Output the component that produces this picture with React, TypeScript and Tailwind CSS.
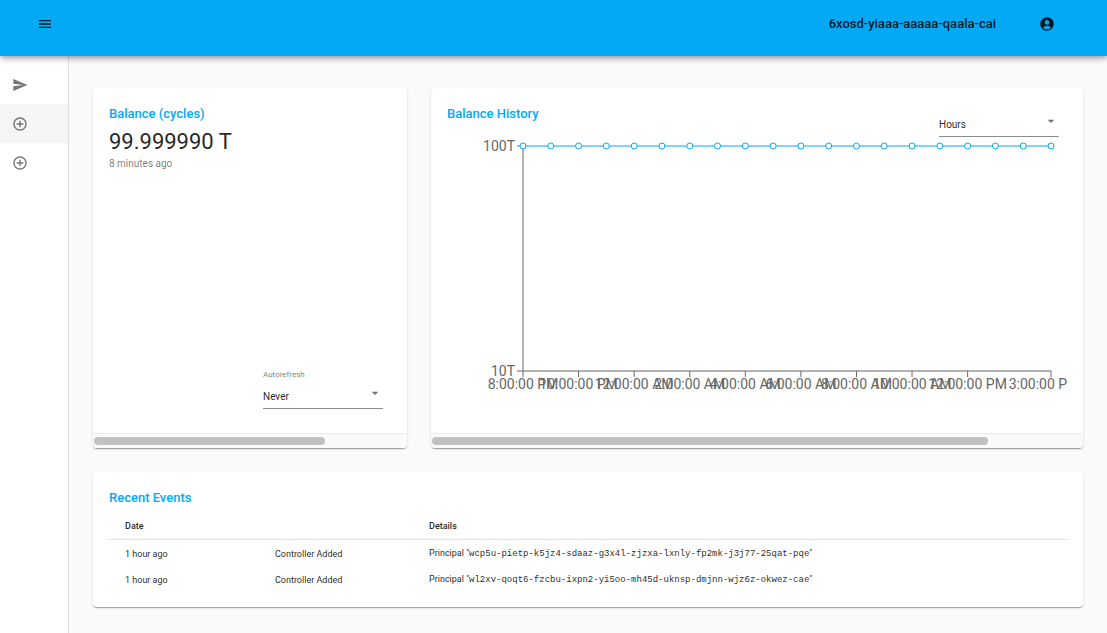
import type { ReactNode } from 'react';
import { MdAccountCircle, MdAddCircleOutline, MdArrowDropDown, MdMenu, MdSend } from 'react-icons/md';

const CARD_SHADOW =
  'shadow-[0_2px_1px_-1px_rgba(0,0,0,0.2),0_1px_1px_0_rgba(0,0,0,0.14),0_1px_3px_0_rgba(0,0,0,0.12)]';

function Card({ className = '', children }: { className?: string; children: ReactNode }) {
  return (
    <section className={`flex min-w-0 flex-col overflow-hidden rounded bg-white ${CARD_SHADOW} ${className}`}>
      {children}
    </section>
  );
}

function Title({ children }: { children: ReactNode }) {
  return <h2 className="text-[13px] leading-5 font-medium text-[#03a9f4]">{children}</h2>;
}

function Picker({ id, label, hideLabel, options }: { id: string; label: string; hideLabel?: boolean; options: string[] }) {
  return (
    <div className="flex w-[120px] flex-col">
      <label htmlFor={id} className={hideLabel ? 'sr-only' : 'text-[8px] leading-3 text-black/54'}>
        {label}
      </label>
      <div className={`relative ${hideLabel ? '' : 'mt-1'}`}>
        <select
          id={id}
          className="block h-6 w-full appearance-none rounded-none border-b border-[#8c8c8c] bg-transparent text-[10px] leading-4 text-black/87 outline-none"
        >
          {options.map((option) => (
            <option key={option}>{option}</option>
          ))}
        </select>
        <MdArrowDropDown className="pointer-events-none absolute top-0 right-0 size-4 text-black/54" />
      </div>
    </div>
  );
}

function ScrollTrack({ thumb }: { thumb: string }) {
  return (
    <div aria-hidden="true" className="h-[15px] border-t border-[#e8e8e8] bg-[#fafafa] px-px pt-[3px]">
      <div className={`h-2 rounded-full bg-[#c1c1c1] ${thumb}`} />
    </div>
  );
}

const LEFT = 76;
const RIGHT = 604;
const TOP = 9;
const BOTTOM = 234;
const POINTS = Array.from({ length: 20 }, (_, i) => LEFT + (i * (RIGHT - LEFT)) / 19);
const TICKS = [
  { index: 0, label: '8:00:00 PM' },
  { index: 2, label: '10:00:00 PM' },
  { index: 4, label: '12:00:00 AM' },
  { index: 6, label: '2:00:00 AM' },
  { index: 8, label: '4:00:00 AM' },
  { index: 10, label: '6:00:00 AM' },
  { index: 12, label: '8:00:00 AM' },
  { index: 14, label: '10:00:00 AM' },
  { index: 16, label: '12:00:00 PM' },
  { index: 19, label: '3:00:00 PM', x: 597 },
];

function HistoryChart() {
  return (
    <svg viewBox="0 0 620 264" className="block w-full overflow-hidden" role="img" aria-label="Balance history by hour">
      <g stroke="#666" fill="none">
        <path d={`M${LEFT} ${TOP}V${BOTTOM}M${LEFT - 6} ${TOP}H${LEFT}M${LEFT - 6} ${BOTTOM}H${RIGHT}`} />
        {TICKS.map(({ index }) => (
          <path key={index} d={`M${POINTS[index]} ${BOTTOM}v6`} />
        ))}
      </g>
      <g fill="#666" fontSize="14" textAnchor="end">
        <text x={LEFT - 8} y={TOP + 5}>100T</text>
        <text x={LEFT - 8} y={BOTTOM + 5}>10T</text>
      </g>
      <g fill="#666" fontSize="14" textAnchor="middle">
        {TICKS.map(({ index, label, x }) => (
          <text key={index} x={x ?? POINTS[index]} y={BOTTOM + 18}>{label}</text>
        ))}
      </g>
      <path d={`M${LEFT} ${TOP}H${RIGHT}`} stroke="#03a9f4" />
      <g fill="#fff" stroke="#03a9f4">
        {POINTS.map((x) => (
          <circle key={x} cx={x} cy={TOP} r="3" />
        ))}
      </g>
    </svg>
  );
}

const EVENTS = [
  { date: '1 hour ago', event: 'Controller Added', principal: 'wcp5u-pietp-k5jz4-sdaaz-g3x4l-zjzxa-lxnly-fp2mk-j3j77-25qat-pqe' },
  { date: '1 hour ago', event: 'Controller Added', principal: 'wl2xv-qoqt6-fzcbu-ixpn2-yi5oo-mh45d-uknsp-dmjnn-wjz6z-okwez-cae' },
];

const NAV = [
  { label: 'Send cycles', Icon: MdSend, active: false },
  { label: 'Create canister', Icon: MdAddCircleOutline, active: true },
  { label: 'Create wallet', Icon: MdAddCircleOutline, active: false },
];

export default function App() {
  return (
    <div className="flex min-h-screen flex-col bg-[#fafafa] font-['Roboto',sans-serif] text-black/87">
      <header className="relative z-10 flex h-14 items-start justify-between bg-[#03a9f4] pt-4 pr-[52px] pl-[37px] shadow-[0_2px_4px_-1px_rgba(0,0,0,0.2),0_4px_5px_0_rgba(0,0,0,0.14),0_1px_10px_0_rgba(0,0,0,0.12)]">
        <button type="button" aria-label="Open menu">
          <MdMenu className="size-4" />
        </button>
        <div className="flex items-center gap-[43px]">
          <h1 className="text-[13px] leading-4 font-medium">6xosd-yiaaa-aaaaa-qaala-cai</h1>
          <button type="button" aria-label="Account">
            <MdAccountCircle className="size-4" />
          </button>
        </div>
      </header>

      <div className="flex flex-1">
        <nav className="w-[69px] shrink-0 border-r border-[#e0e0e0] bg-white pt-[9px]">
          {NAV.map(({ label, Icon, active }) => (
            <button
              key={label}
              type="button"
              aria-label={label}
              className={`flex h-[39px] w-full items-center pl-3 text-black/54 ${active ? 'bg-[#f5f5f5]' : ''}`}
            >
              <Icon className="size-4" />
            </button>
          ))}
        </nav>

        <main className="grid min-w-0 flex-1 grid-cols-3 content-start gap-6 px-6 pt-8 pb-6">
          <Card>
            <div className="flex flex-1 flex-col p-4">
              <Title>Balance (cycles)</Title>
              <p className="mt-1 text-[22px] leading-7">99.999990 T</p>
              <p className="text-[10px] leading-4 text-black/54">8 minutes ago</p>
              <div className="mt-auto flex justify-end pr-2 pb-2">
                <Picker id="autorefresh" label="Autorefresh" options={['Never', '5 seconds', '1 minute']} />
              </div>
            </div>
            <ScrollTrack thumb="w-[74%]" />
          </Card>

          <Card className="col-span-2">
            <div className="px-4 pt-4 pb-8">
              <div className="flex h-[33px] justify-between pr-2">
                <Title>Balance History</Title>
                <div className="pt-[9px]">
                  <Picker id="period" label="Period" hideLabel options={['Hours', 'Days', 'Weeks']} />
                </div>
              </div>
              <HistoryChart />
            </div>
            <ScrollTrack thumb="w-[85.5%]" />
          </Card>

          <Card className="col-span-3">
            <div className="px-4 pt-4 pb-[15px]">
              <Title>Recent Events</Title>
              <table className="mt-1 w-full table-fixed text-left text-[9px] leading-[13px]">
                <colgroup>
                  <col className="w-[150px]" />
                  <col className="w-[154px]" />
                  <col />
                </colgroup>
                <thead>
                  <tr className="border-b border-[#e0e0e0]">
                    <th className="px-4 pt-2 pb-[6px] font-medium">Date</th>
                    <th aria-label="Event" />
                    <th className="px-4 pt-2 pb-[6px] font-medium">Details</th>
                  </tr>
                </thead>
                <tbody>
                  {EVENTS.map(({ date, event, principal }) => (
                    <tr key={principal}>
                      <td className="px-4 pt-[7px] pb-[5px]">{date}</td>
                      <td className="px-4 pt-[7px] pb-[5px]">{event}</td>
                      <td className="px-4 pt-[7px] pb-[5px]">
                        Principal "<code className="font-['Courier_New','Liberation_Mono',monospace]">{principal}</code>"
                      </td>
                    </tr>
                  ))}
                </tbody>
              </table>
            </div>
          </Card>
        </main>
      </div>
    </div>
  );
}
